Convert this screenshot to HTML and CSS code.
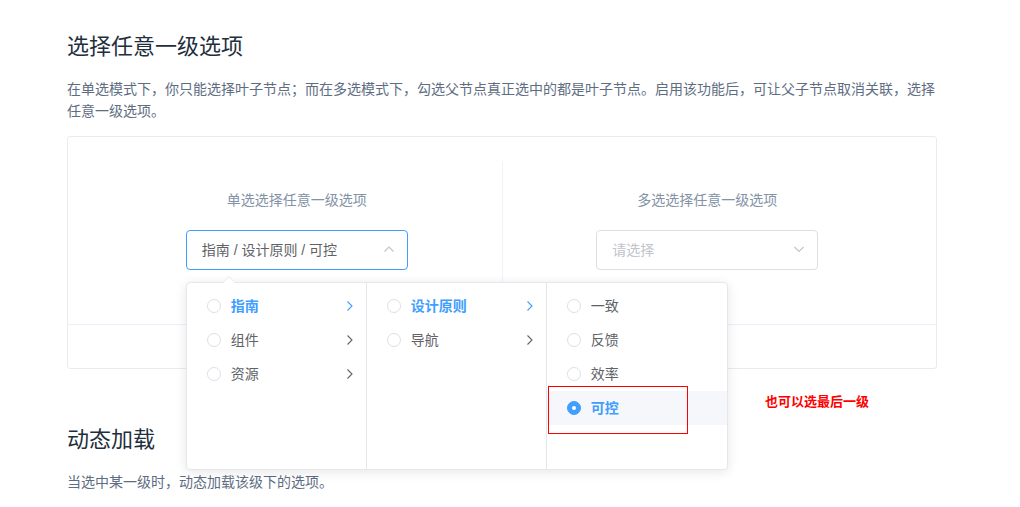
FILE: index.html
```html
<!DOCTYPE html>
<html lang="zh-CN">
<head>
<meta charset="utf-8">
<title>选择任意一级选项</title>
<link rel="stylesheet" href="styles.css">
</head>
<body>
<div class="page">
  <h3 class="title">选择任意一级选项</h3>
  <p class="desc">在单选模式下，你只能选择叶子节点；而在多选模式下，勾选父节点真正选中的都是叶子节点。启用该功能后，可让父子节点取消关联，选择任意一级选项。</p>
  <div class="demo">
    <div class="source">
      <div class="block">
        <span class="demonstration">单选选择任意一级选项</span>
        <div class="cascader">
          <div class="input focus">
            <span class="value">指南 / 设计原则 / 可控</span>
            <svg class="chev" width="12" height="12" viewBox="0 0 12 12"><path d="M1.5 8.5 L6 4 L10.5 8.5" fill="none" stroke="#c0c4cc" stroke-width="1.1"/></svg>
          </div>
          <div class="dropdown">
            <div class="pop-arrow"></div>
            <ul class="menu">
              <li class="node active"><span class="radio"></span><span class="label">指南</span><svg class="next" width="12" height="12" viewBox="0 0 12 12"><path d="M3.5 1.5 L8 6 L3.5 10.5" fill="none" stroke="currentColor" stroke-width="1.1"/></svg></li>
              <li class="node"><span class="radio"></span><span class="label">组件</span><svg class="next" width="12" height="12" viewBox="0 0 12 12"><path d="M3.5 1.5 L8 6 L3.5 10.5" fill="none" stroke="currentColor" stroke-width="1.1"/></svg></li>
              <li class="node"><span class="radio"></span><span class="label">资源</span><svg class="next" width="12" height="12" viewBox="0 0 12 12"><path d="M3.5 1.5 L8 6 L3.5 10.5" fill="none" stroke="currentColor" stroke-width="1.1"/></svg></li>
            </ul>
            <ul class="menu">
              <li class="node active"><span class="radio"></span><span class="label">设计原则</span><svg class="next" width="12" height="12" viewBox="0 0 12 12"><path d="M3.5 1.5 L8 6 L3.5 10.5" fill="none" stroke="currentColor" stroke-width="1.1"/></svg></li>
              <li class="node"><span class="radio"></span><span class="label">导航</span><svg class="next" width="12" height="12" viewBox="0 0 12 12"><path d="M3.5 1.5 L8 6 L3.5 10.5" fill="none" stroke="currentColor" stroke-width="1.1"/></svg></li>
            </ul>
            <ul class="menu">
              <li class="node"><span class="radio"></span><span class="label">一致</span></li>
              <li class="node"><span class="radio"></span><span class="label">反馈</span></li>
              <li class="node"><span class="radio"></span><span class="label">效率</span></li>
              <li class="node active selected"><span class="radio checked"></span><span class="label">可控</span></li>
            </ul>
          </div>
        </div>
      </div>
      <div class="block">
        <span class="demonstration">多选选择任意一级选项</span>
        <div class="cascader">
          <div class="input">
            <span class="placeholder">请选择</span>
            <svg class="chev" width="12" height="12" viewBox="0 0 12 12"><path d="M1.5 4 L6 8.5 L10.5 4" fill="none" stroke="#c0c4cc" stroke-width="1.1"/></svg>
          </div>
        </div>
      </div>
    </div>
    <div class="meta"></div>
  </div>
  <h3 class="title title-next">动态加载</h3>
  <p class="desc">当选中某一级时，动态加载该级下的选项。</p>
  <div class="note-box"></div>
  <div class="note">也可以选最后一级</div>
</div>
</body>
</html>
```

FILE: styles.css
```css
* { box-sizing: border-box; }

body {
  margin: 0;
  background: #fff;
  font-family: "Liberation Sans", "Noto Sans CJK SC", sans-serif;
}

.page {
  position: relative;
  width: 870px;
  margin-left: 67px;
  padding-top: 32px;
}

.title {
  margin: 0;
  font-size: 22px;
  line-height: 30px;
  font-weight: 400;
  color: #1f2f3d;
}

.title-next {
  margin-top: 56px;
}

.desc {
  margin: 16px 0 14px;
  font-size: 14px;
  line-height: 22px;
  color: #5e6d82;
}

.demo {
  border: 1px solid #ebebeb;
  border-radius: 3px;
}

.source {
  display: flex;
  padding: 24px;
}

.block {
  flex: 1;
  display: flex;
  flex-direction: column;
  align-items: center;
  padding: 30px 0;
  border-right: 1px solid #eff2f6;
}

.block:last-child {
  border-right: none;
}

.demonstration {
  display: block;
  font-size: 14px;
  line-height: 19px;
  color: #8492a6;
  margin-bottom: 20px;
}

.cascader {
  position: relative;
  width: 222px;
}

.input {
  display: flex;
  align-items: center;
  height: 40px;
  padding: 0 15px 2px;
  border: 1px solid #dcdfe6;
  border-radius: 4px;
  font-size: 14px;
  color: #606266;
  background: #fff;
}

.input.focus {
  border-color: #409eff;
}

.value, .placeholder {
  flex: 1;
}

.placeholder {
  color: #c0c4cc;
}

.chev {
  margin-right: -3px;
}

.dropdown {
  position: absolute;
  left: 0;
  top: 52px;
  z-index: 10;
  display: flex;
  height: 188px;
  background: #fff;
  border: 1px solid #e4e7ed;
  border-radius: 4px;
  box-shadow: 0 2px 12px 0 rgba(0, 0, 0, 0.1);
}

.pop-arrow {
  position: absolute;
  left: 35px;
  top: -7px;
  width: 0;
  height: 0;
  border-left: 7px solid transparent;
  border-right: 7px solid transparent;
  border-bottom: 7px solid #e4e7ed;
}

.pop-arrow::after {
  content: "";
  position: absolute;
  left: -6px;
  top: 1px;
  width: 0;
  height: 0;
  border-left: 6px solid transparent;
  border-right: 6px solid transparent;
  border-bottom: 6px solid #fff;
}

.menu {
  list-style: none;
  margin: 0;
  padding: 6px 0;
  width: 180px;
  border-right: 1px solid #e4e7ed;
}

.menu:last-of-type {
  border-right: none;
}

.node {
  position: relative;
  display: flex;
  align-items: center;
  height: 34px;
  padding: 0 30px 0 20px;
  font-size: 14px;
  color: #606266;
}

.node .label {
  position: relative;
  top: -1px;
}

.node .next {
  position: absolute;
  right: 10px;
  top: 11px;
  color: #606266;
}

.node.active {
  color: #409eff;
  font-weight: 700;
}

.node.active .next {
  color: #409eff;
}

.node.selected {
  background: #f5f7fa;
}

.radio {
  width: 14px;
  height: 14px;
  border: 1px solid #dcdfe6;
  border-radius: 50%;
  background: #fff;
  flex: none;
}

.radio.checked {
  position: relative;
  background: #409eff;
  border-color: #409eff;
}

.radio.checked::after {
  content: "";
  position: absolute;
  left: 4px;
  top: 4px;
  width: 4px;
  height: 4px;
  border-radius: 50%;
  background: #fff;
}

.label {
  padding: 0 10px;
}

.meta {
  height: 44px;
  border-top: 1px solid #eaeefb;
}

.note-box {
  position: absolute;
  left: 481px;
  top: 386px;
  width: 140px;
  height: 48px;
  border: 1px solid #f00;
  z-index: 20;
}

.note {
  position: absolute;
  left: 698px;
  top: 393px;
  font-size: 13px;
  line-height: 18px;
  font-weight: 700;
  color: #f00;
}
```
